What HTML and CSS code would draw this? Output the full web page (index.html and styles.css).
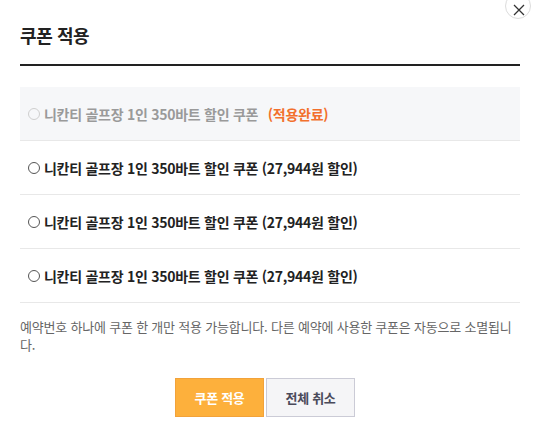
FILE: index.html
```html
<!DOCTYPE html>
<html lang="ko">
<head>
    <meta charset="UTF-8">
    <title>쿠폰 적용</title>
    <link rel="stylesheet" href="styles.css">
</head>
<body>
<div class="modal">
    <button class="close" type="button">
        <svg width="12" height="12" viewBox="0 0 12 12"><path d="M1 1L11 11M11 1L1 11" stroke="#333" stroke-width="1.3" fill="none"/></svg>
    </button>
    <h2 class="title">쿠폰 적용</h2>

    <ul class="coupons">
        <li class="disabled"><span class="radio"></span>니칸티 골프장 1인 350바트 할인 쿠폰 <em class="done">(적용완료)</em></li>
        <li><span class="radio"></span>니칸티 골프장 1인 350바트 할인 쿠폰 (27,944원 할인)</li>
        <li><span class="radio"></span>니칸티 골프장 1인 350바트 할인 쿠폰 (27,944원 할인)</li>
        <li><span class="radio"></span>니칸티 골프장 1인 350바트 할인 쿠폰 (27,944원 할인)</li>
    </ul>

    <p class="note">예약번호 하나에 쿠폰 한 개만 적용 가능합니다. 다른 예약에 사용한 쿠폰은 자동으로 소멸됩니다.</p>

    <div class="btns">
        <button class="btn apply" type="button">쿠폰 적용</button>
        <button class="btn cancel" type="button">전체 취소</button>
    </div>
</div>
</body>
</html>
```

FILE: styles.css
```css
*{
    margin: 0;
    padding: 0;
    list-style: none;
    box-sizing: border-box;
}
html,body{
    background-color: #fff;
    font-family: "Noto Sans CJK KR", "Noto Sans", sans-serif;
    color: #222;
}
.modal{
    position: relative;
    width: 520px;
    padding-left: 20px;
}
.close{
    position: absolute;
    left: 505px;
    top: -7px;
    width: 26px;
    height: 26px;
    border: 1px solid #dcdcdc;
    border-radius: 50%;
    background: #fff;
    display: flex;
    align-items: center;
    justify-content: center;
    padding-top: 7px;
    padding-left: 1px;
}
.title{
    font-size: 18px;
    font-weight: 700;
    line-height: 24px;
    padding: 23px 0 17px;
    border-bottom: 2px solid #222;
    letter-spacing: -0.4px;
}

.coupons{
    margin-top: 21px;
}
.coupons li{
    display: flex;
    align-items: center;
    height: 54px;
    padding-left: 8px;
    border-bottom: 1px solid #e8e8e8;
    font-size: 14px;
    font-weight: 700;
    letter-spacing: -0.27px;
    white-space: pre;
}
.coupons li.disabled{
    background-color: #f6f7f9;
    color: #9a9a9a;
}
.radio{
    width: 12px;
    height: 12px;
    border: 1px solid #555;
    border-radius: 50%;
    margin-right: 4px;
    flex-shrink: 0;
}
.disabled .radio{
    border-color: #cfcfcf;
}
.done{
    font-style: normal;
    color: #f2702d;
    margin-left: 6px;
}

.note{
    margin-top: 15px;
    font-size: 13px;
    line-height: 18px;
    color: #666;
    letter-spacing: -0.2px;
}

.btns{
    display: flex;
    justify-content: center;
    gap: 2px;
    margin-top: 24px;
    padding-right: 10px;
}
.btn{
    width: 89px;
    height: 39px;
    font-family: inherit;
    font-size: 13px;
    font-weight: 700;
    letter-spacing: -0.3px;
}
.apply{
    background-color: #fdb03c;
    border: 1px solid #f2a23a;
    color: #fff;
}
.cancel{
    background-color: #f5f5f7;
    border: 1px solid #cbcbd6;
    color: #4a4a5a;
}
```
